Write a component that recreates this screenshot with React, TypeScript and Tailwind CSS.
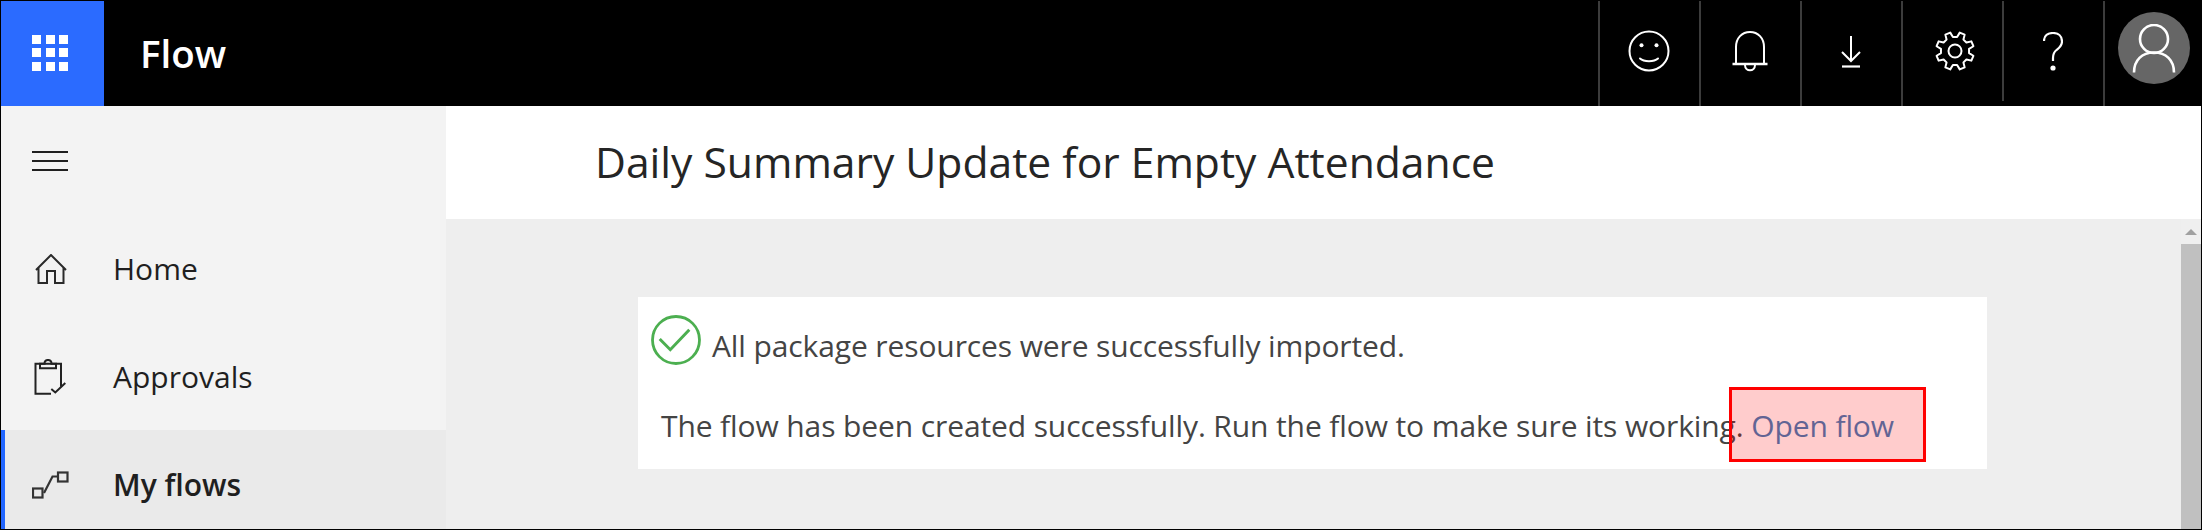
const font = "font-['Open_Sans','Noto_Sans',sans-serif]";

function Divider({ short }: { short?: boolean }) {
  return <div className={short ? "w-[2px] h-[100px] bg-[#3c3c3c]" : "w-[2px] h-[105px] bg-[#3c3c3c]"} />;
}

function HBtn({ children }: { children: React.ReactNode }) {
  return <div className="w-[99px] h-[105px] flex items-center justify-center pb-[5px] pr-[1px] text-white">{children}</div>;
}

function gearPath() {
  const cx = 20, cy = 20, ro = 19, ri = 14.2;
  const pts: string[] = [];
  for (let i = 0; i < 8; i++) {
    const a = 22.5 + i * 45 - 90;
    const list: [number, number][] = [[ri, a - 14], [ro, a - 8], [ro, a + 8], [ri, a + 14]];
    for (const [r, d] of list) {
      const t = (d * Math.PI) / 180;
      pts.push(`${(cx + r * Math.cos(t)).toFixed(2)} ${(cy + r * Math.sin(t)).toFixed(2)}`);
    }
  }
  return "M" + pts.join("L") + "Z";
}

function NavItem({ icon, label, h }: { icon: React.ReactNode; label: string; h: string }) {
  return (
    <div className={`${h} flex items-center pl-[31px] text-[#1f1f1f]`}>
      <div className="w-[37px] h-[37px] flex items-center justify-center">{icon}</div>
      <span className="ml-[44px] text-[30px] leading-none">{label}</span>
    </div>
  );
}

export default function App() {
  return (
    <div className={`w-[2202px] h-[530px] overflow-hidden bg-black pl-[1px] pt-[1px] pr-[1px] pb-[1px] flex flex-col ${font}`}>
      <header className="h-[105px] bg-black flex items-start shrink-0">
        <div className="w-[103px] h-[105px] bg-[#2b6bff] flex items-center justify-center pr-[5px] pb-[2px]">
          <div className="grid grid-cols-3 gap-[4.5px]">
            {Array.from({ length: 9 }).map((_, i) => <div key={i} className="w-[9px] h-[9px] bg-white" />)}
          </div>
        </div>
        <div className="ml-[36px] text-white text-[38.5px] leading-[105px] font-semibold">Flow</div>
        <div className="ml-auto flex">
          <Divider />
          <HBtn>
            <svg width="42" height="42" viewBox="0 0 42 42" fill="none" stroke="white" strokeWidth="2"><circle cx="21" cy="21" r="19.5" /><circle cx="13.500" cy="15.300" r="2" fill="white" stroke="none" /><circle cx="28.500" cy="15.300" r="2" fill="white" stroke="none" /><path d="M12 28.500c4 3.500 14 3.500 18 0" strokeLinecap="round" /></svg>
          </HBtn>
          <Divider />
          <HBtn>
            <svg width="36" height="41" viewBox="0 0 36 41" fill="none" stroke="white" strokeWidth="2"><path d="M4 32.500V16C4 7 10 1 18 1s14 6 14 15v16.500" /><path d="M0.500 33h35" strokeWidth="2.600" /><path d="M13 34c0 7 10 7 10 0" /></svg>
          </HBtn>
          <Divider />
          <HBtn>
            <svg width="20" height="33" viewBox="0 0 20 33" fill="none" stroke="white" strokeWidth="2"><path d="M10 1v25M1 17l9 9 9-9" /><path d="M1 31.500h18" strokeWidth="2.200" /></svg>
          </HBtn>
          <Divider />
          <div className="w-[99px] h-[105px] flex items-center justify-center pb-[5px] pl-[5px]">
            <svg width="40" height="40" viewBox="0 0 40 40" fill="none" stroke="white" strokeWidth="2" strokeLinejoin="round"><circle cx="20" cy="20" r="6.500" /><path d={gearPath()} /></svg>
          </div>
          <Divider short />
          <HBtn>
            <svg width="20" height="39" viewBox="0 0 20 39" fill="none" stroke="white" strokeWidth="2.200"><path d="M1 9C1 3.500 5 1 10 1c5.500 0 9 3.500 9 8.500 0 4.500-3 6.500-5.500 8.500C11 20 10 22 10 26v3" /><circle cx="10" cy="36" r="2.600" fill="white" stroke="none" /></svg>
          </HBtn>
          <Divider />
          <div className="w-[96px] h-[105px] pt-[11px] pl-[13px]">
            <div className="w-[72px] h-[72px] rounded-full bg-[#666666] flex items-center justify-center pt-[1px]">
              <svg width="44" height="49" viewBox="0 0 44 49" fill="none" stroke="white" strokeWidth="2.600"><circle cx="22" cy="15" r="14" /><path d="M2 48.500C2 36 10 28.500 22 28.500s20 7.500 20 20" /></svg>
            </div>
          </div>
        </div>
      </header>
      <div className="flex-1 flex min-h-0 bg-white">
        <aside className="w-[445px] bg-[#f3f3f3] shrink-0 flex flex-col">
          <div className="h-[110px] flex items-center pl-[31px]">
            <div className="w-[36px] flex flex-col gap-[7px]">
              <div className="h-[2px] bg-[#1f1f1f]" /><div className="h-[2px] bg-[#1f1f1f]" /><div className="h-[2px] bg-[#1f1f1f]" />
            </div>
          </div>
          <NavItem h="h-[106px]" label="Home" icon={<svg width="32" height="30" viewBox="0 0 32 30" fill="none" stroke="#2a2a2a" strokeWidth="2"><path d="M1 16L16 1l15 15M3.500 14v15H12V17h8v12h8.500V14" /></svg>} />
          <NavItem h="h-[108px] pt-[2px]" label="Approvals" icon={<svg width="33" height="36" viewBox="0 0 33 36" fill="none" stroke="#222" strokeWidth="2"><path d="M17 34.700H1.500V4.700h25.500v23" /><path d="M6 4.700v4.600h16V4.700h-4.500C17.500-.300 10.500-.300 10.500 4.700z" /><path d="M17.300 30l4 3.500L31.300 24" /></svg>} />
          <div className="h-[99px] flex items-center bg-[#eaeaea] border-l-[4px] border-[#2266ff] pl-[27px] pt-[10px] text-[#1f1f1f] font-semibold">
            <div className="w-[37px] h-[37px] flex items-center justify-center">
              <svg width="37" height="28" viewBox="0 0 37 28" fill="none" stroke="#333" strokeWidth="2.200"><rect x="1" y="17.500" width="9.500" height="9" /><rect x="26" y="1.500" width="9.500" height="9" /><path d="M12 22l8.500-16.500H26" /></svg>
            </div>
            <span className="ml-[44px] text-[30px] leading-none">My flows</span>
          </div>
        </aside>
        <main className="flex-1 flex flex-col min-w-0">
          <div className="h-[113px] bg-white flex items-center pl-[149px] pb-[2px] text-[#252525] text-[42.6px] whitespace-nowrap">Daily Summary Update for Empty Attendance</div>
          <div className="flex-1 flex bg-[#eeeeee] min-h-0">
            <div className="flex-1 pl-[192px] pt-[78px] min-w-0">
              <div className="relative w-[1349px] h-[172px] bg-white text-[#444444] text-[30px] tracking-[-0.11px]">
                <div className="flex items-start pl-[13px] pt-[18px]">
                  <svg width="50" height="50" viewBox="0 0 50 50" fill="none" stroke="#4caf50" strokeWidth="2.800" className="shrink-0"><circle cx="25" cy="25" r="23.500" /><path d="M8.700 24l10.600 10.700 19-20" strokeWidth="3" /></svg>
                  <span className="ml-[11px] leading-[40px] pt-[11px] whitespace-nowrap">All package resources were successfully imported.</span>
                </div>
                <div className="pl-[23px] pt-[40px] leading-[40px] whitespace-nowrap">
                  The flow has been created successfully. Run the flow to make sure its working. <span className="text-[#3b7db9]">Open flow</span>
                </div>
                <div className="absolute left-[1091px] top-[90px] w-[197px] h-[75px] border-[3px] border-[#ff0000] bg-[#ff0000]/20" />
              </div>
            </div>
            <div className="w-[20px] bg-[#c0c0c0] flex flex-col shrink-0">
              <div className="w-full h-[25px] bg-[#efefef] flex items-center justify-center">
                <svg width="12" height="6" viewBox="0 0 12 6"><path d="M0 6L6 0l6 6z" fill="#a0a0a0" /></svg>
              </div>
            </div>
          </div>
        </main>
      </div>
    </div>
  );
}
